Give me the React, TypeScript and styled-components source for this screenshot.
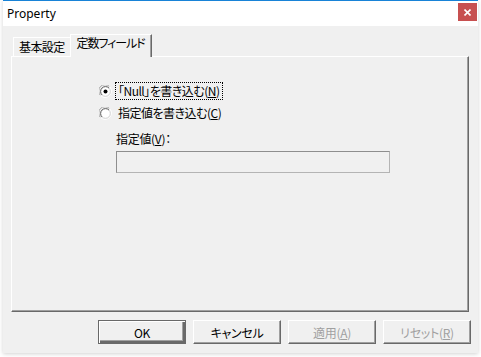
import React, { useState } from "react";
import styled, { createGlobalStyle } from "styled-components";

const GlobalStyle = createGlobalStyle`
  html, body {
    margin: 0;
    padding: 0;
    background: #ffffff;
  }
  body {
    width: 481px;
    height: 357px;
    overflow: hidden;
  }
`;

const jp = `"Noto Sans CJK JP", "Noto Sans", sans-serif`;

const Screen = styled.div`
  padding: 0 3px 4px 3px;
`;

const Window = styled.div`
  width: 475px;
  height: 353px;
  box-sizing: border-box;
  border-top: 1px solid #1883d7;
  display: flex;
  flex-direction: column;
  box-shadow: 0 1px 4px rgba(0, 0, 0, 0.18);
`;

const TitleBar = styled.div`
  height: 25px;
  background: #ffffff;
  display: flex;
  align-items: flex-start;
  justify-content: space-between;
  padding-left: 4px;
`;

const Title = styled.span`
  font-family: "Noto Sans", "Liberation Sans", sans-serif;
  font-size: 12px;
  line-height: 25px;
  color: #000;
`;

const CloseButton = styled.button`
  width: 19px;
  height: 18px;
  margin: 2px 1px 0 0;
  padding: 0;
  border: none;
  background: #c75050;
  display: flex;
  align-items: center;
  justify-content: center;
`;

const Client = styled.div`
  flex: 1;
  background: #f0f0f0;
  display: flex;
  flex-direction: column;
  padding: 8px 9px 9px 8px;
`;

const TabStrip = styled.div`
  height: 22px;
  display: flex;
  align-items: flex-end;
  padding-left: 2px;
`;

const Tab = styled.div<{ $active?: boolean }>`
  position: relative;
  z-index: ${(p) => (p.$active ? 2 : 1)};
  box-sizing: border-box;
  height: ${(p) => (p.$active ? 23 : 19)}px;
  margin-bottom: ${(p) => (p.$active ? -1 : 0)}px;
  padding: 0 ${(p) => (p.$active ? 6 : 5)}px;
  background: #f0f0f0;
  border-top: 1px solid #ffffff;
  border-left: 1px solid #ffffff;
  border-right: ${(p) => (p.$active ? "1px solid #696969" : "none")};
  box-shadow: ${(p) => (p.$active ? "inset -1px 0 0 #a0a0a0" : "none")};
  font-family: ${jp};
  font-feature-settings: "palt";
  font-size: 12px;
  letter-spacing: ${(p) => (p.$active ? "-1.1px" : "-0.6px")};
  line-height: ${(p) => (p.$active ? 16 : 18)}px;
  color: #000;
  white-space: nowrap;
`;

const Panel = styled.div`
  height: 256px;
  box-sizing: border-box;
  border-top: 1px solid #ffffff;
  border-left: 1px solid #ffffff;
  border-right: 1px solid #696969;
  border-bottom: 1px solid #696969;
  box-shadow: inset -1px -1px 0 #a0a0a0;
  padding: 26px 0 0 87px;
  display: flex;
  flex-direction: column;
`;

const OptionRow = styled.label`
  display: flex;
  align-items: center;
  gap: 4px;
  height: 16px;
  margin-bottom: 6px;
`;

const OptionText = styled.span<{ $focused?: boolean }>`
  font-family: ${jp};
  font-feature-settings: "palt";
  font-size: 12px;
  letter-spacing: -0.5px;
  line-height: 14px;
  padding: 0 1px;
  color: #000;
  outline: ${(p) => (p.$focused ? "1px dotted #000" : "none")};
  outline-offset: 0;
  border: 1px solid transparent;
`;

const U = styled.span`
  text-decoration: underline;
  text-underline-offset: 1px;
`;

const Field = styled.div`
  margin: 4px 0 0 17px;
  display: flex;
  flex-direction: column;
  gap: 4px;
`;

const FieldLabel = styled.span`
  font-family: ${jp};
  font-feature-settings: "palt";
  font-size: 12px;
  letter-spacing: -0.3px;
  line-height: 16px;
  color: #000;
`;

const TextBox = styled.div`
  width: 274px;
  height: 22px;
  box-sizing: border-box;
  background: #f0f0f0;
  border: 1px solid #b4b4b4;
  border-top-color: #8e8e8e;
  border-left-color: #8e8e8e;
`;

const ButtonRow = styled.div`
  display: flex;
  justify-content: flex-end;
  gap: 7px;
  margin: 8px -2px 0 0;
`;

const DialogButton = styled.button<{ $default?: boolean }>`
  width: 88px;
  height: 24px;
  box-sizing: border-box;
  padding: 0;
  background: #f0f0f0;
  font-family: ${jp};
  font-feature-settings: "palt";
  font-size: 12px;
  letter-spacing: -0.3px;
  color: #000;
  border: 1px solid;
  border-color: ${(p) =>
    p.$default ? "#696969" : "#ffffff #696969 #696969 #ffffff"};
  box-shadow: ${(p) =>
    p.$default
      ? "inset 1px 1px 0 #ffffff, inset -2px -2px 0 #696969, inset -3px -3px 0 #a0a0a0"
      : "inset -1px -1px 0 #a0a0a0"};
  &:disabled {
    color: #a0a0a0;
  }
`;

const Radio = ({ checked }: { checked?: boolean }) => (
  <svg width="13" height="13" viewBox="0 0 13 13">
    <path d="M1.5 10.5 A6 6 0 0 1 10.5 1.5" fill="none" stroke="#a0a0a0" strokeWidth="1" />
    <path d="M10.5 1.5 A6 6 0 0 1 1.5 10.5" fill="none" stroke="#ffffff" strokeWidth="1" />
    <circle cx="6.5" cy="6.5" r="4.8" fill="#ffffff" stroke="#d4d4d4" strokeWidth="1" />
    <path d="M3 10 A4.8 4.8 0 0 1 10 3" fill="none" stroke="#696969" strokeWidth="1" />
    {checked && <circle cx="6.5" cy="6.5" r="2" fill="#000" />}
  </svg>
);

export default function App() {
  const [mode, setMode] = useState<"null" | "value">("null");

  return (
    <>
      <GlobalStyle />
      <Screen>
        <Window>
          <TitleBar>
            <Title>Property</Title>
            <CloseButton aria-label="close">
              <svg width="7" height="7" viewBox="0 0 7 7">
                <path d="M0.5 0.5 L6.5 6.5 M6.5 0.5 L0.5 6.5" stroke="#fff" strokeWidth="1.6" />
              </svg>
            </CloseButton>
          </TitleBar>
          <Client>
            <TabStrip>
              <Tab>基本設定</Tab>
              <Tab $active>定数フィールド</Tab>
            </TabStrip>
            <Panel>
              <OptionRow onClick={() => setMode("null")}>
                <Radio checked={mode === "null"} />
                <OptionText $focused>
                  「Null」を書き込む(<U>N</U>)
                </OptionText>
              </OptionRow>
              <OptionRow onClick={() => setMode("value")}>
                <Radio checked={mode === "value"} />
                <OptionText>
                  指定値を書き込む(<U>C</U>)
                </OptionText>
              </OptionRow>
              <Field>
                <FieldLabel>
                  指定値(<U>V</U>)：
                </FieldLabel>
                <TextBox />
              </Field>
            </Panel>
            <ButtonRow>
              <DialogButton $default>OK</DialogButton>
              <DialogButton>キャンセル</DialogButton>
              <DialogButton disabled>
                適用(<U>A</U>)
              </DialogButton>
              <DialogButton disabled>
                リセット(<U>R</U>)
              </DialogButton>
            </ButtonRow>
          </Client>
        </Window>
      </Screen>
    </>
  );
}
